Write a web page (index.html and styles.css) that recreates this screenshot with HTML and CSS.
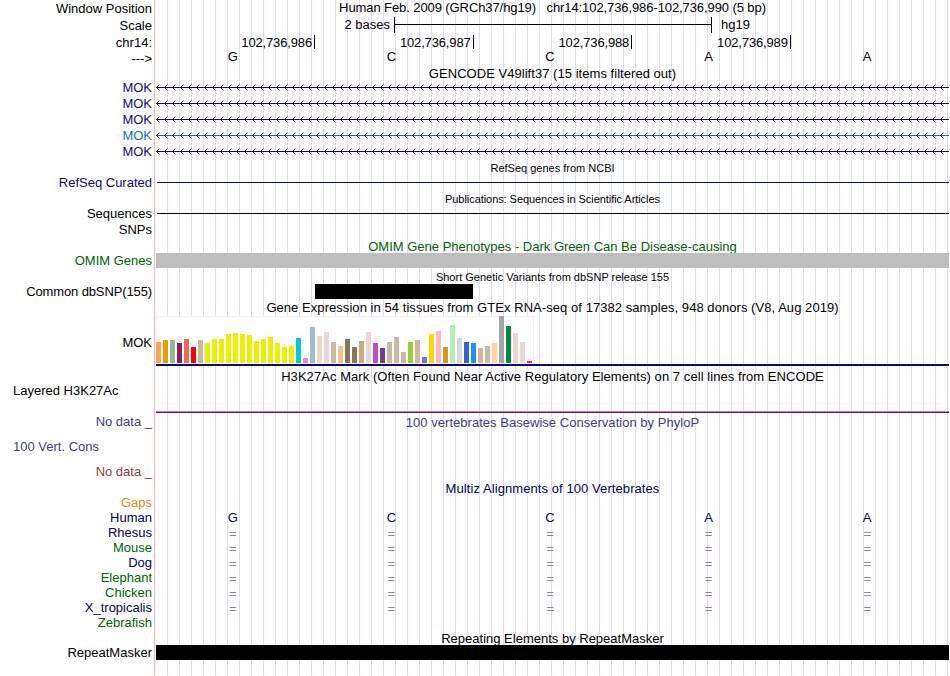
FILE: index.html
```html
<!DOCTYPE html>
<html lang="en">
  <head>
    <meta charset="UTF-8" />
    <meta name="viewport" content="width=device-width, initial-scale=1.0" />
    <title>Human chr14:102,736,986-102,736,990 - Genome Browser</title>
    <link rel="stylesheet" href="styles.css">
  </head>
  <body>
    <!-- shared intron line with strand arrows -->
    <svg class="defs" width="0" height="0" aria-hidden="true">
      <defs>
        <pattern id="chevron" width="8" height="7" patternUnits="userSpaceOnUse">
          <path d="M0 3h1v1h-1zM1 2h1v1h-1zM1 4h1v1h-1zM2 1h1v1h-1zM2 5h1v1h-1z" />
          <path d="M3 0h1v1h-1zM3 6h1v1h-1z" opacity="0.4" />
        </pattern>
        <symbol id="strand" viewBox="0 0 793 7">
          <rect x="1" y="3" width="792" height="1" />
          <rect width="789" height="7" style="fill: url(#chevron)" />
        </symbol>
      </defs>
    </svg>

    <main class="browser">
      <div class="row position">
        <div class="label">Window Position</div>
        <div class="track"><span class="caption">Human Feb. 2009 (GRCh37/hg19) &nbsp; chr14:102,736,986-102,736,990 (5 bp)</span></div>
      </div>
      <div class="row scale">
        <div class="label">Scale</div>
        <div class="track">
          <span class="scale-size">2 bases</span>
          <span class="scale-bar"></span>
          <span class="scale-db">hg19</span>
        </div>
      </div>
      <div class="row ruler">
        <div class="label">chr14:</div>
        <div class="track columns">
          <span>102,736,986</span><span>102,736,987</span><span>102,736,988</span><span>102,736,989</span><span></span>
        </div>
      </div>
      <div class="row bases">
        <div class="label">---&gt;</div>
        <div class="track columns">
          <span>G</span><span>C</span><span>C</span><span>A</span><span>A</span>
        </div>
      </div>

      <h2 class="title gencode">GENCODE V49lift37 (15 items filtered out)</h2>
      <div class="row gene navy">
        <div class="label">MOK</div>
        <div class="track"><svg width="793" height="7"><use href="#strand" /></svg></div>
      </div>
      <div class="row gene navy">
        <div class="label">MOK</div>
        <div class="track"><svg width="793" height="7"><use href="#strand" /></svg></div>
      </div>
      <div class="row gene navy">
        <div class="label">MOK</div>
        <div class="track"><svg width="793" height="7"><use href="#strand" /></svg></div>
      </div>
      <div class="row gene blue">
        <div class="label">MOK</div>
        <div class="track"><svg width="793" height="7"><use href="#strand" /></svg></div>
      </div>
      <div class="row gene navy">
        <div class="label">MOK</div>
        <div class="track"><svg width="793" height="7"><use href="#strand" /></svg></div>
      </div>

      <h2 class="title small refseq">RefSeq genes from NCBI</h2>
      <div class="row dense navy">
        <div class="label">RefSeq Curated</div>
        <div class="track"><div class="line"></div></div>
      </div>

      <h2 class="title small pubs">Publications: Sequences in Scientific Articles</h2>
      <div class="row dense">
        <div class="label">Sequences</div>
        <div class="track"><div class="line"></div></div>
      </div>
      <div class="row dense">
        <div class="label">SNPs</div>
        <div class="track"></div>
      </div>

      <h2 class="title omim green">OMIM Gene Phenotypes - Dark Green Can Be Disease-causing</h2>
      <div class="row block">
        <div class="label green">OMIM Genes</div>
        <div class="track"><div class="fill gray"></div></div>
      </div>

      <h2 class="title small dbsnp">Short Genetic Variants from dbSNP release 155</h2>
      <div class="row block">
        <div class="label tight">Common dbSNP(155)</div>
        <div class="track columns"><span></span><span class="fill"></span></div>
      </div>

      <h2 class="title gtex">Gene Expression in 54 tissues from GTEx RNA-seq of 17382 samples, 948 donors (V8, Aug 2019)</h2>
      <div class="row expression">
        <div class="label">MOK</div>
        <div class="track">
          <div class="bars">
            <i style="height: 21px; background: #ffa54f"></i>
            <i style="height: 23px; background: #ee9a00"></i>
            <i style="height: 23px; background: #8fbc8f"></i>
            <i style="height: 20px; background: #8b1c62"></i>
            <i style="height: 24px; background: #ee6a50"></i>
            <i style="height: 16px; background: #ff0000"></i>
            <i style="height: 23px; background: #cdb79e"></i>
            <i style="height: 20px; background: #eeee00"></i>
            <i style="height: 24px; background: #eeee00"></i>
            <i style="height: 24px; background: #eeee00"></i>
            <i style="height: 29px; background: #eeee00"></i>
            <i style="height: 30px; background: #eeee00"></i>
            <i style="height: 29px; background: #eeee00"></i>
            <i style="height: 28px; background: #eeee00"></i>
            <i style="height: 22px; background: #eeee00"></i>
            <i style="height: 24px; background: #eeee00"></i>
            <i style="height: 26px; background: #eeee00"></i>
            <i style="height: 20px; background: #eeee00"></i>
            <i style="height: 16px; background: #eeee00"></i>
            <i style="height: 17px; background: #eeee00"></i>
            <i style="height: 25px; background: #00cdcd"></i>
            <i style="height: 5px; background: #ee82ee"></i>
            <i style="height: 36px; background: #9ac0cd"></i>
            <i style="height: 27px; background: #eed5d2"></i>
            <i style="height: 31px; background: #eed5d2"></i>
            <i style="height: 21px; background: #cdb79e"></i>
            <i style="height: 17px; background: #eec591"></i>
            <i style="height: 24px; background: #8b7355"></i>
            <i style="height: 16px; background: #8b7355"></i>
            <i style="height: 22px; background: #cdaa7d"></i>
            <i style="height: 31px; background: #eed5d2"></i>
            <i style="height: 20px; background: #b452cd"></i>
            <i style="height: 15px; background: #7a378b"></i>
            <i style="height: 21px; background: #cdb79e"></i>
            <i style="height: 26px; background: #cdb79e"></i>
            <i style="height: 11px; background: #cdb79e"></i>
            <i style="height: 21px; background: #9acd32"></i>
            <i style="height: 23px; background: #cdb79e"></i>
            <i style="height: 6px; background: #7b68ee"></i>
            <i style="height: 29px; background: #ffd700"></i>
            <i style="height: 32px; background: #ffb6c1"></i>
            <i style="height: 16px; background: #cd9b1d"></i>
            <i style="height: 38px; background: #b4eeb4"></i>
            <i style="height: 25px; background: #d9d9d9"></i>
            <i style="height: 21px; background: #3a5fcd"></i>
            <i style="height: 20px; background: #1e90ff"></i>
            <i style="height: 15px; background: #cdb79e"></i>
            <i style="height: 17px; background: #cdb79e"></i>
            <i style="height: 20px; background: #ffd39b"></i>
            <i style="height: 47px; background: #a6a6a6"></i>
            <i style="height: 37px; background: #008b45"></i>
            <i style="height: 30px; background: #eed5d2"></i>
            <i style="height: 21px; background: #eed5d2"></i>
            <i style="height: 2px; background: #ff00ff"></i>
          </div>
          <div class="gene-model"></div>
        </div>
      </div>

      <h2 class="title h3k27ac">H3K27Ac Mark (Often Found Near Active Regulatory Elements) on 7 cell lines from ENCODE</h2>
      <div class="row layered">
        <div class="label left">Layered H3K27Ac</div>
        <div class="track"><div class="signal"></div></div>
      </div>

      <div class="row nodata indigo">
        <div class="label">No data _</div>
        <div class="track"><span class="caption phylop">100 vertebrates Basewise Conservation by PhyloP</span></div>
      </div>
      <div class="row cons indigo">
        <div class="label left">100 Vert. Cons</div>
      </div>
      <div class="row nodata maroon">
        <div class="label">No data _</div>
      </div>

      <h2 class="title multiz darkblue">Multiz Alignments of 100 Vertebrates</h2>
      <div class="row species orange">
        <div class="label">Gaps</div>
      </div>
      <div class="row species darkblue">
        <div class="label">Human</div>
        <div class="track columns"><span>G</span><span>C</span><span>C</span><span>A</span><span>A</span></div>
      </div>
      <div class="row species darkblue">
        <div class="label">Rhesus</div>
        <div class="track columns match"><span>=</span><span>=</span><span>=</span><span>=</span><span>=</span></div>
      </div>
      <div class="row species green">
        <div class="label">Mouse</div>
        <div class="track columns match"><span>=</span><span>=</span><span>=</span><span>=</span><span>=</span></div>
      </div>
      <div class="row species darkblue">
        <div class="label">Dog</div>
        <div class="track columns match"><span>=</span><span>=</span><span>=</span><span>=</span><span>=</span></div>
      </div>
      <div class="row species green">
        <div class="label">Elephant</div>
        <div class="track columns match"><span>=</span><span>=</span><span>=</span><span>=</span><span>=</span></div>
      </div>
      <div class="row species green">
        <div class="label">Chicken</div>
        <div class="track columns match"><span>=</span><span>=</span><span>=</span><span>=</span><span>=</span></div>
      </div>
      <div class="row species darkblue">
        <div class="label">X_tropicalis</div>
        <div class="track columns match"><span>=</span><span>=</span><span>=</span><span>=</span><span>=</span></div>
      </div>
      <div class="row species green">
        <div class="label">Zebrafish</div>
      </div>

      <h2 class="title rmsk">Repeating Elements by RepeatMasker</h2>
      <div class="row block">
        <div class="label">RepeatMasker</div>
        <div class="track"><div class="fill"></div></div>
      </div>
    </main>
  </body>
</html>
```
FILE: styles.css
```css
* {
  margin: 0;
  padding: 0;
  box-sizing: border-box;
}

body {
  font-family: "Liberation Sans", Arial, Helvetica, sans-serif;
  font-size: 13px;
  color: #000;
  background: #fff;
  overflow: hidden;
}

.defs {
  display: block;
}

/* guide lines every 12px, red line between labels and tracks */
.browser {
  width: 949px;
  height: 676px;
  background:
    linear-gradient(#ffb4b4, #ffb4b4) 154px 0 / 1px 100% no-repeat,
    repeating-linear-gradient(90deg, transparent 0 11px, #dcdcf8 11px 12px) 156px 0 / 793px 100% no-repeat;
}

.row {
  display: grid;
  grid-template-columns: 152px 793px;
  column-gap: 4px;
  height: 16px;
  line-height: 16px;
  white-space: nowrap;
}

.label {
  text-align: right;
}

.label.left {
  text-align: left;
  padding-left: 13px;
}

.label.tight {
  letter-spacing: -0.12px;
}

.title {
  margin-left: 156px;
  width: 793px;
  height: 15px;
  line-height: 15px;
  font-size: 13px;
  font-weight: normal;
  text-align: center;
  white-space: nowrap;
}

.title.small {
  font-size: 11px;
}

.caption {
  display: block;
  text-align: center;
}

.columns {
  display: grid;
  grid-template-columns: repeat(5, 158.6px);
}

/* header */
.position {
  height: 17px;
  line-height: 17px;
}

.position .caption {
  line-height: 15px;
  letter-spacing: -0.09px;
}

.scale .track {
  display: flex;
}

.scale .label {
  line-height: 18px;
}

.scale-size {
  width: 234px;
  text-align: right;
}

.scale-bar {
  width: 318px;
  height: 16px;
  margin: 0 9px 0 4px;
  border: solid #000;
  border-width: 0 1px;
  background: linear-gradient(#000, #000) 0 7px / 100% 1px no-repeat;
}

.ruler {
  height: 17px;
  line-height: 20px;
}

.ruler .columns {
  margin-left: 0.4px;
}

.ruler span {
  height: 14px;
  margin-top: 2px;
  padding-right: 2px;
  line-height: 16px;
  letter-spacing: -0.15px;
  text-align: right;
  border-right: 1px solid #000;
}

.ruler span:last-child {
  border: 0;
}

.bases {
  line-height: 18px;
}

.bases .columns,
.species .columns {
  text-align: center;
}

.bases span,
.species span {
  padding-right: 5px;
}

.bases .columns {
  line-height: 13px;
}

.gencode {
  height: 14px;
  letter-spacing: 0.04px;
}

/* genes */
.gene svg {
  display: block;
  margin-top: 4px;
  fill: currentColor;
}

.refseq,
.pubs,
.omim {
  line-height: 17px;
}

.pubs {
  letter-spacing: -0.06px;
}

.line {
  height: 1px;
  margin: 7px 0 0 1px;
  background: currentColor;
}

.block {
  height: 15px;
  line-height: 15px;
}

.fill {
  height: 15px;
  background: #000;
}

.fill.gray {
  background: #bebebe;
}

.dbsnp {
  height: 16px;
  line-height: 18px;
}

.gtex {
  height: 17px;
  line-height: 18px;
  letter-spacing: 0.055px;
}

/* expression */
.expression {
  height: 50px;
  line-height: 54px;
}

.bars {
  display: flex;
  align-items: flex-end;
  gap: 2px;
  width: 378px;
  height: 48px;
  padding-bottom: 1px;
  background: #fff;
  box-shadow: inset 0 0 0 1px #f2f2f2;
}

.bars i {
  width: 5px;
}

.gene-model {
  height: 2px;
  background: #0c0c78;
}

.h3k27ac {
  height: 17px;
  line-height: 21px;
  letter-spacing: 0.06px;
}

.layered {
  height: 30px;
}

.signal {
  height: 2px;
  margin-top: 28px;
  border-top: 1px solid #c878e6;
  background: #640f5a;
}

.nodata {
  height: 17px;
  line-height: 17px;
}

.phylop {
  line-height: 19px;
  letter-spacing: 0.03px;
}

.cons {
  height: 33px;
  line-height: 33px;
}

.multiz {
  line-height: 17px;
  letter-spacing: 0.08px;
}

.species {
  height: 15px;
  line-height: 15px;
}

.match {
  color: #8484b8;
  line-height: 18px;
}

.rmsk {
  line-height: 17px;
}

/* colors */
.navy {
  color: #0c0c78;
}

.blue {
  color: #1170b4;
}

.green {
  color: #006400;
}

.green .match {
  color: #8484b8;
}

.indigo {
  color: #3c3c8c;
}

.maroon {
  color: #8c3c3c;
}

.darkblue {
  color: #000064;
}

.orange {
  color: #e68c14;
}
```
